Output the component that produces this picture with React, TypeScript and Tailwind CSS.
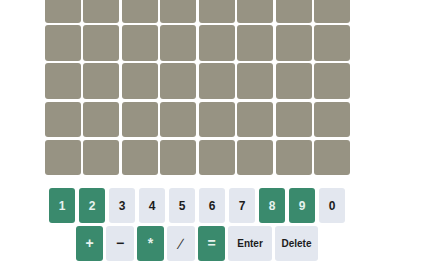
const ROWS = 5;
const COLS = 8;

const row1 = ['1', '2', '3', '4', '5', '6', '7', '8', '9', '0'];
const row2 = ['+', '−', '*', '/', '=', 'Enter', 'Delete'];
const used = new Set(['1', '2', '8', '9', '+', '*', '=']);

function Key({ label, small }: { label: string; small?: boolean }) {
  const on = used.has(label);
  const wide = label.length > 1;
  const size = wide ? 'w-[43.5px] text-[10px]' : small ? 'w-[26px] text-[12px]' : 'w-[27.5px] text-[14px]';
  return (
    <button
      className={`h-[35px] rounded-[3px] flex items-center justify-center font-bold ${size} ${
        on ? 'bg-[#3a8a6d] text-[#e6f2ed]' : 'bg-[#e3e7ef] text-[#1c1c1c]'
      }`}
    >
      {label === '/' ? <span className="font-normal text-[15px] text-[#333]">∕</span> : label}
    </button>
  );
}

export default function App() {
  return (
    <div
      className="w-[445px] h-[265px] overflow-hidden bg-white"
      style={{ fontFamily: '"Liberation Sans", Arial, sans-serif' }}
    >
      <div className="ml-[45px] w-[305px] flex flex-col items-center">
        <div className="mt-[-13px] grid grid-cols-8 gap-[2.6px] w-[305px]">
          {Array.from({ length: ROWS * COLS }).map((_, i) => (
            <div key={i} className="h-[35.6px] rounded-[3px] bg-[#979383]" />
          ))}
        </div>

        <div className="mt-[13px] mr-[1px] flex gap-[4px]">
          {row1.map((k) => (
            <Key key={k} label={k} small />
          ))}
        </div>
        <div className="mt-[3px] mr-[1px] flex gap-[3px]">
          {row2.map((k) => (
            <Key key={k} label={k} />
          ))}
        </div>
      </div>
    </div>
  );
}
